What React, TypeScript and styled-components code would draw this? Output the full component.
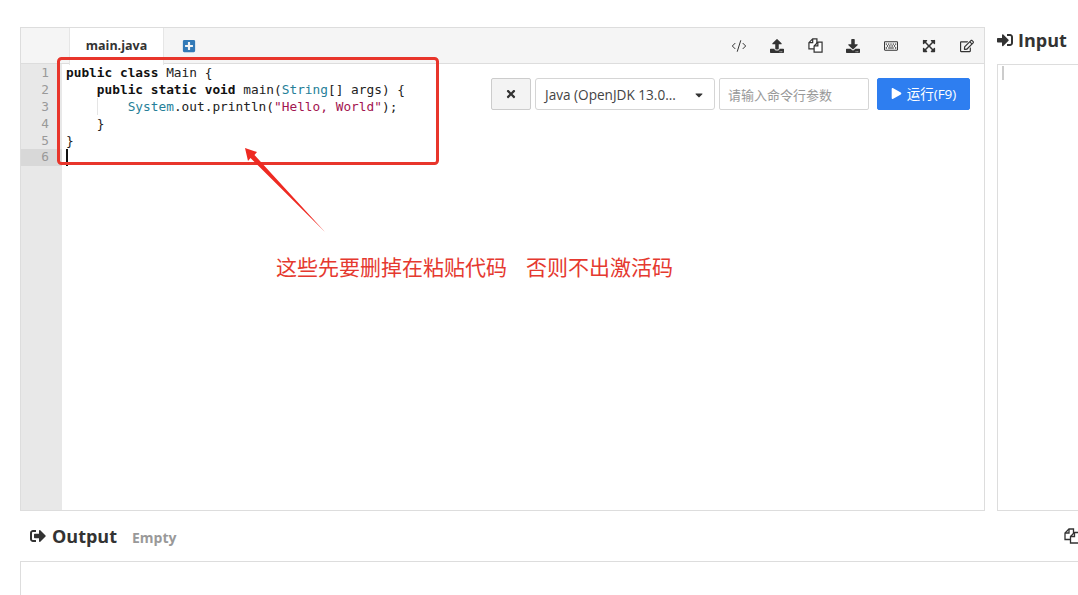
import React from "react";
import styled, { createGlobalStyle } from "styled-components";
import { FaCaretDown, FaDownload, FaExpandArrowsAlt, FaPlay, FaPlusSquare, FaRegEdit, FaRegKeyboard, FaSignInAlt, FaSignOutAlt, FaTimes, FaUpload } from "react-icons/fa";
import { CodeXml } from "lucide-react";

const Global = createGlobalStyle`
  html, body { margin: 0; padding: 0; width: 1078px; height: 595px; overflow: hidden; background: #fff; }
  body { font-family: "Open Sans", "Noto Sans CJK SC", sans-serif; color: #333; }
  * { box-sizing: border-box; }
`;
const Page = styled.div`
  position: relative; width: 1078px; height: 595px; overflow: hidden; padding: 27px 0 0 20px;
`;
const Workspace = styled.div`display: flex; gap: 12px; height: 484px; width: 1300px;`;
const Editor = styled.section`
  position: relative; width: 965px; height: 484px; border: 1px solid #ddd; display: flex; flex-direction: column; flex: none;
`;
const Toolbar = styled.div`
  height: 36px; flex: none; background: #f5f5f5; border-bottom: 1px solid #ddd; display: flex; align-items: center; padding-left: 48px;
`;
const Tab = styled.div`
  width: 95px; height: 37px; margin-top: 1px; padding-bottom: 2px; background: #fff; border: solid #e6e6e6; border-width: 0 1px;
  display: flex; align-items: center; justify-content: center; font-size: 12.5px; font-weight: 700; color: #333;
`;
const AddTab = styled.span`display: flex; margin-left: 18px; color: #337ab7; font-size: 14px;`;
const Tools = styled.div`margin-left: auto; display: flex; align-items: center; gap: 22px; padding-right: 9px; color: #333;`;
const Tool = styled.span`display: flex; width: 16px; height: 16px; align-items: center; justify-content: center; font-size: 14px;`;
const Body = styled.div`flex: 1; display: flex; min-height: 0;`;
const Gutter = styled.div`
  width: 41px; padding-top: 1px; background: #e8e8e8; color: #999; font: 12.8px/16.9px "DejaVu Sans Mono", monospace; text-align: right;
`;
const LineNo = styled.div<{ $active?: boolean }>`
  padding-right: 13px; height: 16.9px; background: ${p => (p.$active ? "#d8d8d8" : "transparent")};
`;
const Code = styled.div`
  position: relative; padding: 1px 0 0 4px; flex: 1; font: 12.8px/16.9px "DejaVu Sans Mono", monospace; color: #222;
`;
const CodeLine = styled.div`height: 16.9px; white-space: pre;`;
const Guide = styled.span`position: absolute; left: 35px; top: 34px; width: 1px; height: 17px; background: #e5e5e5;`;
const Caret = styled.span`position: absolute; left: 4px; top: 85px; width: 2px; height: 17px; background: #111;`;
const Kw = styled.span`font-weight: 700; color: #111;`;
const Type = styled.span`color: #267f99;`;
const Str = styled.span`color: #a31551;`;
const RunBar = styled.div`position: absolute; right: 14px; top: 50px; display: flex; height: 32px;`;
const ClearBtn = styled.button`
  width: 40px; height: 32px; margin-right: 4px; border: 1px solid #ccc; border-radius: 2px; background: #f3f3f3; color: #333;
  display: flex; align-items: center; justify-content: center; font-size: 12px; padding: 0;
`;
const LangSelect = styled.div`
  width: 180px; height: 32px; margin-right: 4px; border: 1px solid #d5d5d5; border-radius: 3px; background: #fff; padding: 1px 9px 0;
  display: flex; align-items: center; justify-content: space-between; font-size: 13.6px; color: #444;
`;
const ArgInput = styled.input`
  width: 150px; height: 32px; margin-right: 8px; border: 1px solid #d5d5d5; border-radius: 2px; padding: 0 8px;
  font: 13px "Noto Sans CJK SC", sans-serif; outline: none;
  &::placeholder { color: #999; opacity: 1; }
`;
const RunBtn = styled.button`
  width: 93px; height: 32px; border: 1px solid #2e7ef0; border-radius: 2px; background: #2e7ef0; color: #fff; padding: 0 0 2px;
  display: flex; align-items: center; justify-content: center; gap: 5px; font: 13.5px "Open Sans", "Noto Sans CJK SC", sans-serif;
`;
const Side = styled.aside`width: 320px; flex: none; display: flex; flex-direction: column;`;
const PanelTitle = styled.h2`
  margin: 0; height: 37px; flex: none; display: flex; align-items: center; gap: 5px; padding-bottom: 11px; font-size: 18px; font-weight: 700; color: #333;
`;
const InputBox = styled.div`flex: 1; position: relative; border: 1px solid #ddd;`;
const InputCaret = styled.span`position: absolute; left: 4px; top: 1px; width: 2px; height: 14px; background: #ccc;`;
const OutputHead = styled.div`
  width: 1060px; height: 50px; display: flex; align-items: center; padding: 0 0 0 10px; gap: 6px; font-size: 18px; font-weight: 700; color: #333;
`;
const EmptyTag = styled.span`margin-left: 9px; margin-top: 2px; font-size: 14px; font-weight: 700; color: #999;`;
const CopyOut = styled.span`margin-left: auto; display: flex;`;
const OutputBox = styled.div`width: 1100px; height: 60px; border: 1px solid #ddd;`;
const Annotation = styled.svg`position: absolute; left: 0; top: 0; pointer-events: none;`;
const Note = styled.div`
  position: absolute; left: 276px; top: 251px; white-space: pre; font: 21px/30px "Noto Sans CJK SC", sans-serif; color: #e5392f;
`;
const NoteGap = styled.span`display: inline-block; width: 19px;`;

const CopyIcon = ({ size = 15 }: { size?: number }) => (
  <svg width={size} height={size} viewBox="0 0 16 16" fill="#fff" stroke="#333" strokeWidth="1.3">
    <path d="M1 11.5V5l4-4h4.500v10.500z" />
    <path d="M5 1v4H1" fill="none" />
    <path d="M6.500 15V8.500l4-4H15V15z" />
    <path d="M10.500 4.500v4h-4" fill="none" />
  </svg>
);

export default function App() {
  return (
    <Page>
      <Global />
      <Workspace>
        <Editor>
          <Toolbar>
            <Tab>main.java</Tab>
            <AddTab><FaPlusSquare /></AddTab>
            <Tools>
              <Tool><CodeXml size={16} strokeWidth={1.5} /></Tool>
              <Tool><FaUpload /></Tool>
              <Tool><CopyIcon /></Tool>
              <Tool><FaDownload /></Tool>
              <Tool><FaRegKeyboard /></Tool>
              <Tool><FaExpandArrowsAlt /></Tool>
              <Tool><FaRegEdit /></Tool>
            </Tools>
          </Toolbar>
          <Body>
            <Gutter>
              {[1, 2, 3, 4, 5, 6].map(n => <LineNo key={n} $active={n === 6}>{n}</LineNo>)}
            </Gutter>
            <Code>
              <Guide />
              <Caret />
              <CodeLine><Kw>public class</Kw>{" Main {"}</CodeLine>
              <CodeLine>{"    "}<Kw>public static void</Kw>{" main("}<Type>String</Type>{"[] args) {"}</CodeLine>
              <CodeLine>{"        "}<Type>System</Type>{".out.println("}<Str>"Hello, World"</Str>{");"}</CodeLine>
              <CodeLine>{"    }"}</CodeLine>
              <CodeLine>{"}"}</CodeLine>
            </Code>
          </Body>
          <RunBar>
            <ClearBtn><FaTimes /></ClearBtn>
            <LangSelect>Java (OpenJDK 13.0...<FaCaretDown size={12} color="#333" /></LangSelect>
            <ArgInput placeholder="请输入命令行参数" />
            <RunBtn><FaPlay size={11} />运行(F9)</RunBtn>
          </RunBar>
        </Editor>
        <Side>
          <PanelTitle><FaSignInAlt size={16} />Input</PanelTitle>
          <InputBox><InputCaret /></InputBox>
        </Side>
      </Workspace>
      <OutputHead>
        <FaSignOutAlt size={16} />Output<EmptyTag>Empty</EmptyTag>
        <CopyOut><CopyIcon size={16} /></CopyOut>
      </OutputHead>
      <OutputBox />
      <Annotation width="1078" height="595" viewBox="0 0 1078 595">
        <rect x="58.500" y="58.500" width="379" height="105" rx="3" fill="none" stroke="#e8352b" strokeWidth="3" />
        <path d="M245 148L257 152L254.500 155L325 232L250.500 158L248 161Z" fill="#ee2a22" />
      </Annotation>
      <Note>{"这些先要删掉在粘贴代码"}<NoteGap />{"否则不出激活码"}</Note>
    </Page>
  );
}
